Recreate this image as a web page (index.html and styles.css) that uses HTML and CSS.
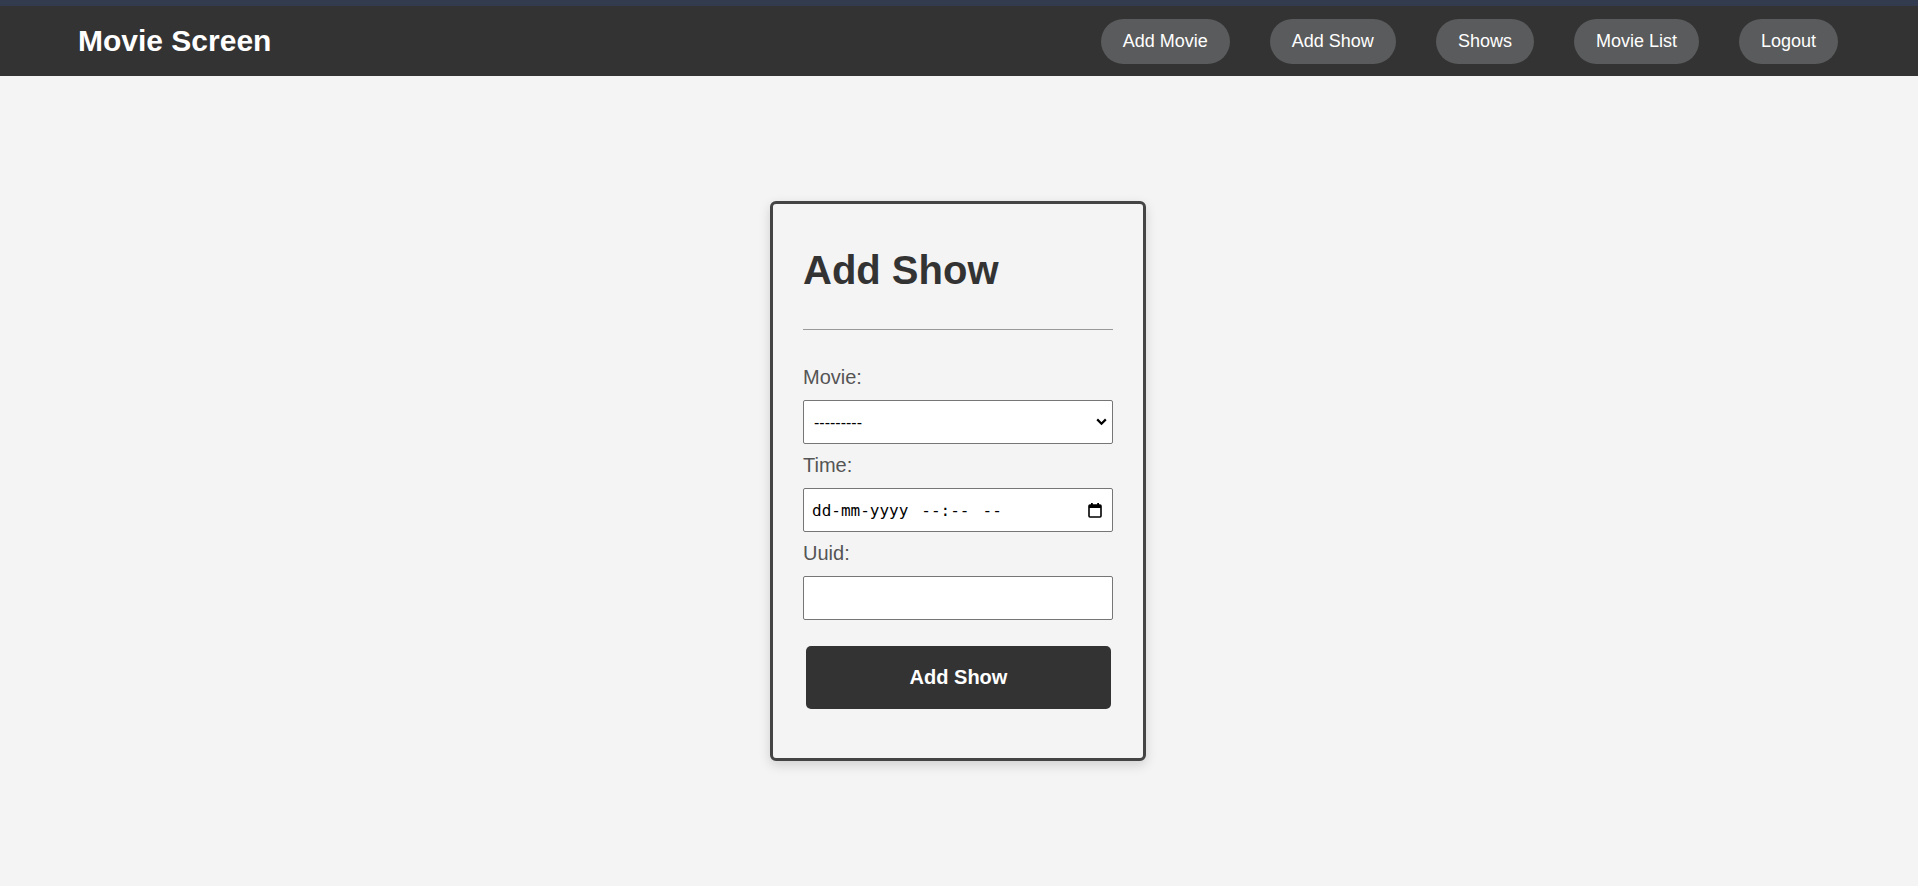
FILE: index.html
```html
<!DOCTYPE html>
<html lang="en">
<head>
<meta charset="utf-8">
<title>Add Show - Movie Screen</title>
<link rel="stylesheet" href="styles.css">
</head>
<body>
<header class="topbar">
  <div class="brand">Movie Screen</div>
  <nav class="nav">
    <a class="pill" href="#">Add Movie</a>
    <a class="pill" href="#">Add Show</a>
    <a class="pill" href="#">Shows</a>
    <a class="pill" href="#">Movie List</a>
    <a class="pill" href="#">Logout</a>
  </nav>
</header>
<main class="stage">
  <section class="card">
    <h2 class="card-title">Add Show</h2>
    <hr class="rule">
    <form class="form">
      <label class="field-label" for="movie">Movie:</label>
      <div class="select-wrap">
        <select id="movie" class="field select">
          <option>---------</option>
        </select>
        <svg class="chevron" width="11" height="8" viewBox="0 0 11 8"><path d="M1.2 1.4 L5.5 5.7 L9.8 1.4" fill="none" stroke="#000" stroke-width="2.2"/></svg>
      </div>
      <label class="field-label" for="time">Time:</label>
      <div class="field datetime" id="time">
        <span class="dt-text"><span>dd-mm-yyyy</span><span class="dt-time">--:--</span><span class="dt-ampm">--</span></span>
        <svg class="cal" width="14" height="16" viewBox="0 0 14 16"><rect x="1" y="3" width="12" height="12" rx="1" fill="none" stroke="#000" stroke-width="1.6"/><rect x="1" y="3" width="12" height="3" fill="#000"/><rect x="3" y="1" width="1.8" height="3" fill="#000"/><rect x="9.2" y="1" width="1.8" height="3" fill="#000"/></svg>
      </div>
      <label class="field-label" for="uuid">Uuid:</label>
      <input id="uuid" class="field" type="text">
      <button class="submit" type="button">Add Show</button>
    </form>
  </section>
</main>
</body>
</html>
```

FILE: styles.css
```css
* { box-sizing: border-box; }
html, body { margin: 0; padding: 0; }
body {
  font-family: "Liberation Sans", Arial, sans-serif;
  background: #f4f4f4;
  min-height: 100vh;
  display: flex;
  flex-direction: column;
}
.topbar {
  border-top: 6px solid #333c4f;
  background: #333333;
  height: 76px;
  display: flex;
  align-items: center;
  justify-content: space-between;
  padding: 0 80px 0 78px;
}
.brand {
  color: #ffffff;
  font-weight: 700;
  font-size: 30px;
  line-height: 34px;
}
.nav {
  display: flex;
  gap: 40px;
}
.pill {
  display: block;
  background: #5a5b5c;
  color: #ffffff;
  text-decoration: none;
  font-size: 18px;
  line-height: 21px;
  padding: 12px 22px;
  border-radius: 23px;
}
.stage {
  flex: 1;
  display: flex;
  align-items: center;
  justify-content: center;
  padding-right: 2px;
}
.card {
  width: 376px;
  border: 3px solid #444444;
  border-radius: 6px;
  background: #f4f4f4;
  padding: 44px 30px 49px;
  box-shadow: 0 4px 12px rgba(0,0,0,0.15);
}
.card-title {
  margin: 0;
  font-size: 40px;
  line-height: 45px;
  font-weight: 700;
  color: #333333;
}
.rule {
  margin: 36px 0;
  border: 0;
  border-top: 1px solid #999999;
  height: 0;
}
.form {
  display: flex;
  flex-direction: column;
}
.field-label {
  display: block;
  font-size: 20px;
  line-height: 22px;
  color: #555555;
  margin-bottom: 12px;
}
.field {
  display: block;
  width: 100%;
  height: 44px;
  border: 1px solid #767676;
  border-radius: 2px;
  background: #ffffff;
  margin: 0 0 10px;
  font-family: "Liberation Sans", Arial, sans-serif;
  font-size: 16px;
  color: #000;
}
.select-wrap {
  position: relative;
}
.select {
  appearance: none;
  -webkit-appearance: none;
  padding: 0 30px 0 10px;
  outline: none;
}
.chevron {
  position: absolute;
  right: 6px;
  top: 18px;
}
.datetime {
  display: flex;
  align-items: center;
  justify-content: space-between;
  padding: 0 10px 0 8px;
}
.dt-text {
  font-family: "DejaVu Sans Mono", "Liberation Mono", monospace;
  font-size: 16px;
  white-space: pre;
  color: #000;
}
.dt-time { margin-left: 13px; }
.dt-ampm { margin-left: 13px; }
.cal { display: block; }
.submit {
  margin: 16px 2px 0 3px;
  height: 63px;
  border: 0;
  border-radius: 5px;
  background: #333333;
  color: #ffffff;
  font-family: "Liberation Sans", Arial, sans-serif;
  font-weight: 700;
  font-size: 20px;
  cursor: pointer;
}
```
